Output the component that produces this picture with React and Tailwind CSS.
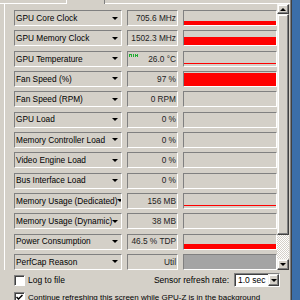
const rows = [
  { label: 'GPU Core Clock', value: '705.6 MHz', fill: 4 },
  { label: 'GPU Memory Clock', value: '1502.3 MHz', fill: 8 },
  { label: 'GPU Temperature', value: '26.0 °C', line: 2, icon: true },
  { label: 'Fan Speed (%)', value: '97 %', fill: 13 },
  { label: 'Fan Speed (RPM)', value: '0 RPM' },
  { label: 'GPU Load', value: '0 %' },
  { label: 'Memory Controller Load', value: '0 %' },
  { label: 'Video Engine Load', value: '0 %' },
  { label: 'Bus Interface Load', value: '0 %' },
  { label: 'Memory Usage (Dedicated)', value: '156 MB', line: 2 },
  { label: 'Memory Usage (Dynamic)', value: '38 MB' },
  { label: 'Power Consumption', value: '46.5 % TDP', fill: 5 },
  { label: 'PerfCap Reason', value: 'Util', util: true },
];

const sunken = 'border border-t-[#808080] border-l-[#808080] border-b-white border-r-white';
const raised = 'border border-t-[#f4f3ef] border-l-[#f4f3ef] border-b-[#404040] border-r-[#404040] shadow-[inset_-1px_-1px_#808080,inset_1px_1px_#ffffff]';

function Arrow({ up }) {
  return up ? (
    <div className="w-0 h-0 border-l-[3px] border-r-[3px] border-b-[3px] border-l-transparent border-r-transparent border-b-black" />
  ) : (
    <div className="w-0 h-0 border-l-[3px] border-r-[3px] border-t-[3px] border-l-transparent border-r-transparent border-t-black" />
  );
}

function TempIcon() {
  return (
    <svg width="9" height="3" viewBox="0 0 9 3" className="absolute left-[1px] top-[2px]">
      <g fill="#1fae32">
        <rect x="0" y="0" width="1" height="3" />
        <rect x="1" y="0" width="1" height="1" />
        <rect x="2" y="0" width="1" height="3" />
        <rect x="4" y="0" width="1" height="3" />
        <rect x="6" y="0" width="1" height="3" />
        <rect x="7" y="1" width="1" height="1" />
        <rect x="8" y="0" width="1" height="3" />
      </g>
    </svg>
  );
}

function Row({ r }) {
  return (
    <div className="flex h-4 gap-[5px]">
      <div className={`${sunken} w-[108px] flex items-center justify-between pl-[1px] pr-[3px] overflow-hidden`}>
        <span className="whitespace-nowrap">{r.label}</span>
        <Arrow />
      </div>
      <div className={`${sunken} w-[51px] relative flex items-center justify-end pr-[1px]`}>
        {r.icon && <TempIcon />}
        <span className="whitespace-nowrap text-[#222]">{r.value}</span>
      </div>
      <div className={`${sunken} w-[94px] flex flex-col justify-end ${r.util ? 'bg-[#a4a4a4]' : ''}`}>
        {r.fill && <div className="bg-[#ff0000]" style={{ height: r.fill }} />}
        {r.line && <div className="bg-[#ff0000] h-px" style={{ marginBottom: r.line }} />}
      </div>
    </div>
  );
}

function Check({ checked }) {
  return (
    <div className="w-[11px] h-[11px] bg-white border border-t-[#808080] border-l-[#808080] border-b-white border-r-white shadow-[inset_1px_1px_#404040] flex items-center justify-center shrink-0">
      {checked && (
        <svg width="7" height="7" viewBox="0 0 7 7">
          <path d="M0.5 3 L2.5 5 L6.5 1" stroke="black" strokeWidth="1.5" fill="none" />
        </svg>
      )}
    </div>
  );
}

export default function App() {
  return (
    <div className="w-[300px] h-[300px] overflow-hidden flex bg-[#d4d0c8] text-black text-[8.3px] leading-none" style={{ fontFamily: '"Liberation Sans", Arial, sans-serif' }}>
      <div className="w-[290px] flex flex-col">
        {/* tab strip */}
        <div className="h-[4px] flex shrink-0">
          <div className="w-[66px] border-b border-white" />
          <div className="w-[39px] border-l border-white border-r border-r-[#808080]" />
          <div className="flex-1 border-b border-white" />
        </div>

        {/* sensor list */}
        <div className="h-[266px] flex shrink-0">
          <div className="w-[4px]" />
          <div className="w-px bg-white" />
          <div className="w-[272px] pl-[9px] pt-[6px] flex flex-col gap-[4.33px]">
            {rows.map((r) => (
              <Row key={r.label} r={r} />
            ))}
          </div>
          {/* scrollbar */}
          <div className="w-[12px] flex flex-col">
            <div className={`${raised} h-[10px] flex items-center justify-center`}>
              <Arrow up />
            </div>
            <div className={`${raised} h-[221px]`} />
            <div className="h-[24px] bg-[repeating-conic-gradient(#ffffff_0_25%,#d4d0c8_0_50%)] bg-[length:2px_2px]" />
            <div className={`${raised} h-[11px] flex items-center justify-center`}>
              <Arrow />
            </div>
          </div>
        </div>

        {/* bottom controls */}
        <div className="pl-[14px] pr-[10px]">
          <div className="h-[14px] mt-[3px] flex items-center">
            <Check />
            <span className="ml-[3px] text-[8.5px]">Log to file</span>
            <span className="ml-auto mr-[5px] text-[8.5px]">Sensor refresh rate:</span>
            <div className={`w-[46px] h-[14px] bg-white ${sunken} shadow-[inset_1px_1px_#404040] flex items-center`}>
              <span className="pl-[3px] flex-1 text-[8.5px]">1.0 sec</span>
              <div className={`${raised} bg-[#d4d0c8] w-[11px] h-full flex items-center justify-center`}>
                <Arrow />
              </div>
            </div>
          </div>
          <div className="mt-[5px] flex items-center">
            <Check checked />
            <span className="ml-[3px] whitespace-nowrap text-[8px]">Continue refreshing this screen while GPU-Z is in the background</span>
          </div>
        </div>
      </div>

      {/* window frame */}
      <div className="w-px bg-[#808080]" />
      <div className="w-px bg-[#404040]" />
      <div className="flex-1 bg-[#3b6ea8]" />
    </div>
  );
}
